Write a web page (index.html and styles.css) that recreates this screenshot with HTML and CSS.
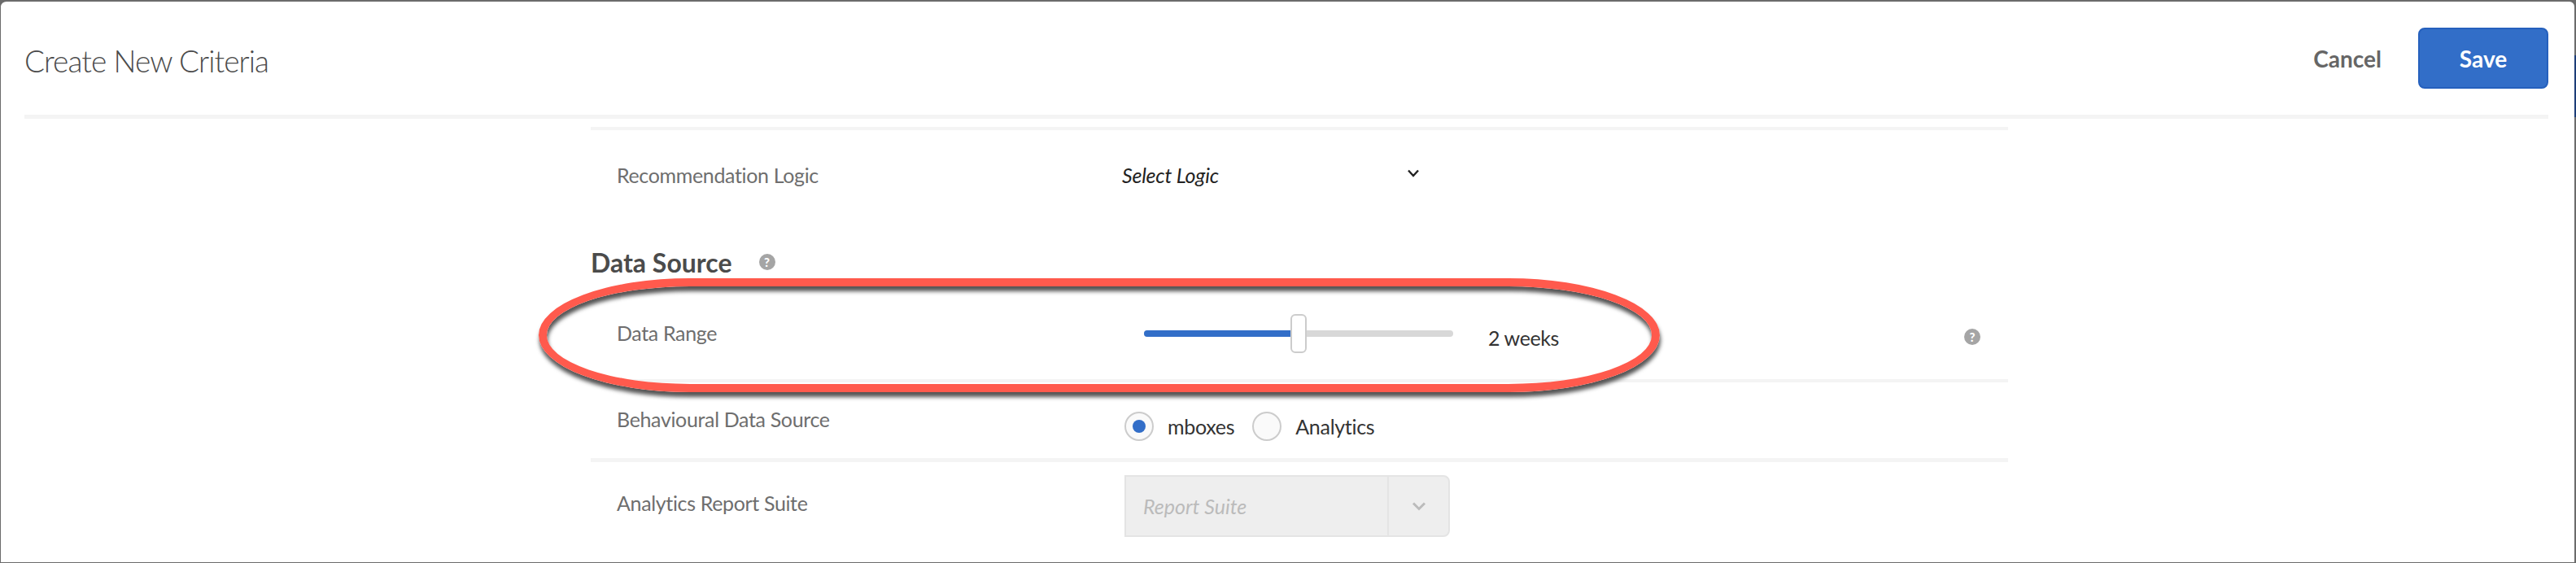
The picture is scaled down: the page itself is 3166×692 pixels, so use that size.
FILE: index.html
```html
<!DOCTYPE html>
<html lang="en">

    <head>
        <meta charset="UTF-8">
        <meta name="viewport" content="width=device-width, initial-scale=1.0">
        <title>Create New Criteria</title>
        <link rel="stylesheet" href="styles.css">
    </head>

    <body>
        <div class="modal">
            <header class="modal-head">
                <h1>Create New Criteria</h1>
                <button class="btn-cancel" type="button">Cancel</button>
                <button class="btn-save" type="button">Save</button>
            </header>

            <form class="criteria-form">
                <div class="row row-logic">
                    <span class="row-label">Recommendation Logic</span>
                    <div class="logic-select">
                        <span>Select Logic</span>
                        <svg class="logic-chevron" viewBox="0 0 16 10" width="16" height="10">
                            <path d="M2 1.5 L8 8 L14 1.5" fill="none" stroke="#222" stroke-width="2.4"/>
                        </svg>
                    </div>
                </div>

                <h2 class="section-title">Data Source <span class="help help-title">?</span></h2>

                <div class="row row-range">
                    <span class="row-label">Data Range</span>
                    <div class="range">
                        <div class="track">
                            <div class="track-fill"></div>
                            <div class="thumb"></div>
                        </div>
                        <span class="range-value">2 weeks</span>
                    </div>
                    <span class="help help-range">?</span>
                </div>

                <div class="row row-behaviour">
                    <span class="row-label">Behavioural Data Source</span>
                    <div class="radio-group">
                        <label class="radio"><span class="radio-mark radio-on"></span>mboxes</label>
                        <label class="radio"><span class="radio-mark"></span>Analytics</label>
                    </div>
                </div>

                <div class="row row-suite">
                    <span class="row-label">Analytics Report Suite</span>
                    <div class="suite-select">
                        <span class="suite-text">Report Suite</span>
                        <span class="suite-arrow">
                            <svg viewBox="0 0 18 12" width="18" height="12">
                                <path d="M2 2.5 L9 9.5 L16 2.5" fill="none" stroke="#bbb" stroke-width="3"/>
                            </svg>
                        </span>
                    </div>
                </div>
            </form>

            <!-- annotation drawn over the Data Range row -->
            <div class="callout"></div>
            <!-- page behind the dialog, showing at its right edge -->
            <div class="edge-strip"></div>
        </div>
    </body>

</html>
```

FILE: styles.css
```css
* {
    box-sizing: border-box;
}

body {
    font-family: Lato, "Open Sans", sans-serif;
    background-color: #6b6b6b;
    margin: 0;
    padding: 0;
}

.modal {
    position: relative;
    width: 3166px;
    height: 692px;
    overflow: hidden;
    background: #fff;
    border: 1px solid #6b6b6b;
    border-top-width: 2px;
    border-right-width: 2px;
    border-radius: 8px 8px 0 0;
}

.modal-head {
    display: flex;
    align-items: flex-start;
    width: 3102px;
    height: 144px;
    margin-left: 29px;
    padding-top: 32px;
    border-bottom: 5px solid #f4f4f4;
}

h1 {
    margin: 0 auto 0 0;
    padding-top: 19px;
    font-size: 37px;
    font-weight: 300;
    line-height: 44px;
    letter-spacing: -0.9px;
    color: #4b4b4b;
}

.btn-cancel {
    margin: 0 45px 0 0;
    padding: 0;
    height: 75px;
    border: none;
    background: none;
    font-family: inherit;
    font-size: 28px;
    font-weight: 700;
    color: #666;
}

.btn-save {
    width: 160px;
    height: 75px;
    padding: 0;
    border: 2px solid #2560bd;
    border-radius: 8px;
    background-color: #326ec8;
    font-family: inherit;
    font-size: 28px;
    font-weight: 700;
    color: #fff;
}

.criteria-form {
    width: 1742px;
    margin: 10px 0 0 725px;
    border-top: 4px solid #f4f4f4;
}

.row {
    display: flex;
    align-items: flex-start;
    border-bottom: 5px solid #f4f4f4;
}

.row-label {
    width: 656px;
    padding-left: 32px;
    font-size: 25px;
    line-height: 30px;
    letter-spacing: -0.35px;
    color: #6e6e6e;
}

.row-logic {
    height: 110px;
    padding-top: 40px;
    border-bottom: none;
}

.logic-select {
    display: flex;
    align-items: center;
    justify-content: space-between;
    width: 366px;
    margin-left: -3px;
}

.logic-select span {
    font-size: 25px;
    font-style: italic;
    line-height: 30px;
    letter-spacing: -0.2px;
    color: #222;
}

.logic-chevron {
    margin-top: -4px;
}

.section-title {
    display: flex;
    align-items: center;
    height: 104px;
    margin: 0;
    font-size: 32px;
    font-weight: 700;
    color: #4b4b4b;
}

.help {
    display: flex;
    justify-content: center;
    align-items: center;
    width: 20px;
    height: 20px;
    border-radius: 50%;
    background-color: #a5a5a5;
    font-size: 15px;
    font-weight: 900;
    color: #fff;
}

.help-title {
    margin-left: 33px;
}

.row-range {
    height: 96px;
    padding-top: 20px;
    border-bottom-width: 4px;
}

.range {
    display: flex;
    align-items: flex-start;
    width: 1032px;
    padding-top: 6px;
    padding-left: 24px;
}

.track {
    position: relative;
    width: 380px;
    height: 8px;
    margin-top: 6px;
    border-radius: 4px;
    background-color: #d8d8d8;
}

.track-fill {
    width: 190px;
    height: 8px;
    border-radius: 4px 0 0 4px;
    background-color: #326ec8;
}

.thumb {
    position: absolute;
    left: 180px;
    top: -20px;
    width: 20px;
    height: 48px;
    border: 2px solid #ccc;
    border-radius: 6px;
    background-color: #fff;
}

.range-value {
    margin-left: 43px;
    font-size: 25px;
    line-height: 30px;
    letter-spacing: -0.4px;
    color: #333;
}

.help-range {
    margin-top: 10px;
    margin-left: 0;
}

.row-behaviour {
    height: 98px;
    padding-top: 30px;
}

.radio-group {
    display: flex;
    gap: 22px;
    margin-top: 6px;
}

.radio {
    display: flex;
    align-items: center;
    gap: 17px;
    height: 36px;
    font-size: 25px;
    letter-spacing: -0.3px;
    color: #333;
}

.radio-mark {
    display: flex;
    justify-content: center;
    align-items: center;
    width: 36px;
    height: 36px;
    border: 2px solid #ccc;
    border-radius: 50%;
    background-color: #fafafa;
}

.radio-on::after {
    content: "";
    width: 16px;
    height: 16px;
    border-radius: 50%;
    background-color: #326ec8;
}

.row-suite {
    height: 120px;
    padding-top: 16px;
    border-bottom: none;
}

.row-suite .row-label {
    margin-top: 19px;
}

.suite-select {
    display: flex;
    width: 400px;
    height: 76px;
    border: 2px solid #e4e4e4;
    border-radius: 0 8px 8px 0;
    background-color: #eee;
}

.suite-text {
    width: 323px;
    padding-left: 21px;
    border-right: 2px solid #e4e4e4;
    font-size: 25px;
    font-style: italic;
    line-height: 72px;
    color: #bbb;
}

.suite-arrow {
    display: flex;
    flex: 1;
    justify-content: center;
    align-items: center;
}

.callout {
    position: absolute;
    left: 661px;
    top: 340px;
    width: 1378px;
    height: 140px;
    border: 10px solid #ff5a4d;
    border-radius: 186px / 70px;
    box-shadow: 1px 6px 5px #555, inset 1px 6px 5px #555;
}

.edge-strip {
    position: fixed;
    left: 3164px;
    top: 68px;
    width: 2px;
    height: 76px;
    background-color: #1d3d78;
}
```
